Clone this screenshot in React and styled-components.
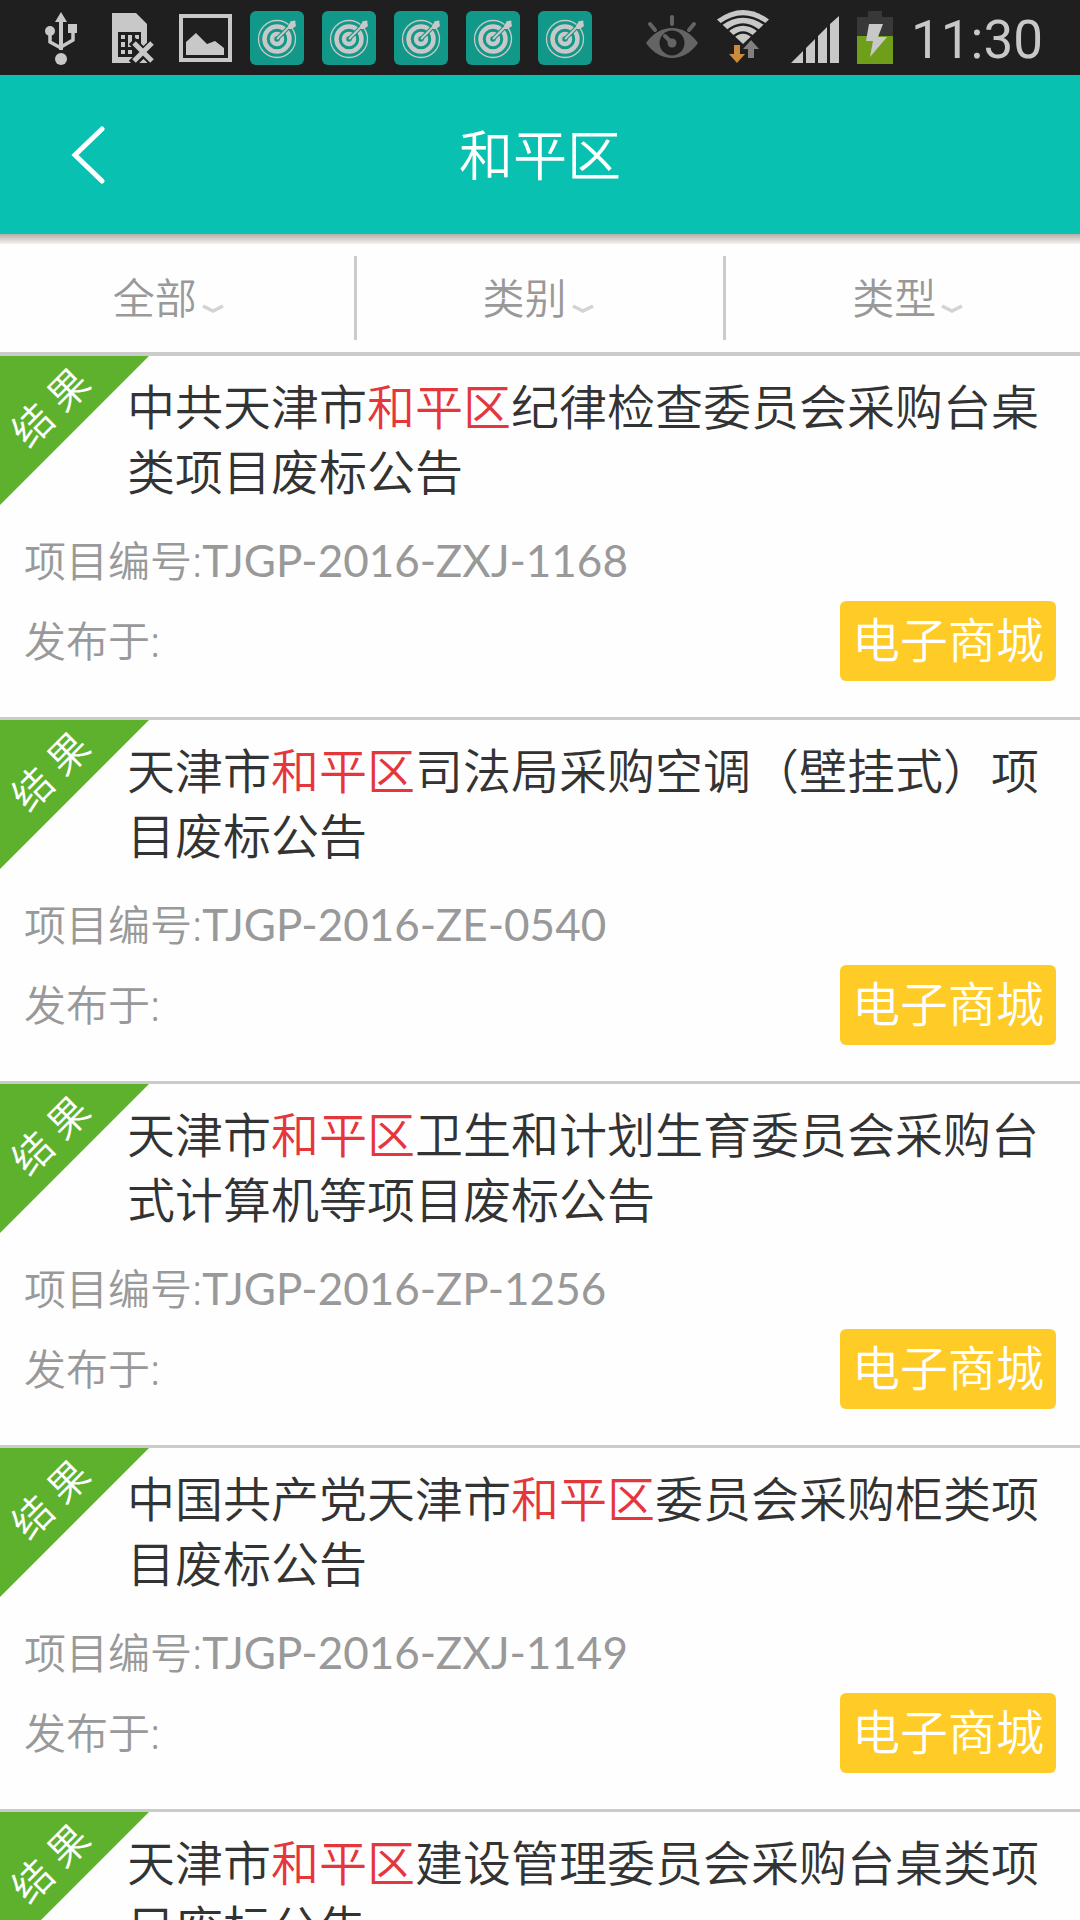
import React from "react";
import styled, { createGlobalStyle } from "styled-components";

const GlobalStyle = createGlobalStyle`
  * {
    box-sizing: border-box;
  }

  body {
    margin: 0;
    background: #fefefe;
    font-family: "Noto Sans", "Noto Sans CJK SC", sans-serif;
  }

  html,
  body {
    height: 100%;
    overflow: hidden;
  }

  #root {
    height: 100%;
  }
`;

const Page = styled.div`
  height: 100%;
  display: flex;
  flex-direction: column;
`;

const StatusBar = styled.div`
  display: flex;
  flex: none;
  align-items: center;
  justify-content: space-between;
  height: 75px;
  padding: 0 37px 0 38px;
  background: #1f1f1f;
`;

const StatusGroup = styled.div`
  display: flex;
  align-items: center;
  gap: 18px;

  svg {
    display: block;
  }
`;

const Clock = styled.time`
  padding-top: 5px;
  font-family: Roboto, sans-serif;
  font-size: 53px;
  line-height: 70px;
  color: #c8c8c8;
`;

const Header = styled.header`
  display: grid;
  flex: none;
  grid-template-columns: 176px 1fr 176px;
  align-items: center;
  height: 159px;
  background: #08c1b1;

  h1 {
    margin: 0;
    font-size: 54px;
    font-weight: 350;
    line-height: 80px;
    text-align: center;
    color: #fff;
  }
`;

const BackButton = styled.button`
  display: flex;
  align-items: center;
  justify-content: center;
  height: 100%;
  padding: 0;
  border: 0;
  background: none;
`;

const Shadow = styled.div`
  flex: none;
  height: 10px;
  background: linear-gradient(#b4aeaa, #f5f2ee);
`;

const FilterBar = styled.nav`
  flex: none;
  overflow: hidden;
  padding: 12px 0;
  border-bottom: 4px solid #cbcbcb;
`;

const Filters = styled.div`
  display: flex;
  margin: 0 -13px;
`;

const FilterButton = styled.button`
  display: flex;
  flex: 1;
  align-items: center;
  justify-content: center;
  gap: 5px;
  height: 84px;
  padding: 0 4px 0 0;
  border: 0;
  background: none;
  font-family: inherit;
  font-size: 42px;
  font-weight: 350;
  line-height: 84px;
  color: #999;

  & + & {
    border-left: 3px solid #cbcbcb;
  }

  svg {
    margin-top: 22px;
  }
`;

const List = styled.ul`
  flex: 1;
  min-height: 0;
  overflow: hidden;
  margin: 0;
  padding: 0;
  list-style: none;
`;

const Item = styled.li`
  position: relative;
  padding: 18px 24px 36px;
  border-bottom: 3px solid #cbcbcb;
`;

const Ribbon = styled.div`
  position: absolute;
  top: 0;
  left: 0;
  display: flex;
  align-items: center;
  justify-content: center;
  width: 149px;
  height: 149px;
  padding: 0 48px 48px 0;
  background: #5eb12d;
  clip-path: polygon(0 0, 100% 0, 0 100%);

  span {
    flex: none;
    font-size: 40px;
    font-weight: 350;
    line-height: 40px;
    white-space: pre;
    color: #fff;
    transform: rotate(-45deg);
  }
`;

const Title = styled.h2`
  margin: 0 0 17px;
  padding-left: 103px;
  font-size: 48px;
  font-weight: 350;
  line-height: 65px;
  color: #333;

  em {
    font-style: normal;
    color: #e5373b;
  }
`;

const Meta = styled.p`
  margin: 0;
  font-size: 42px;
  font-weight: 350;
  line-height: 80px;
  color: #999;
`;

const Code = styled.span`
  font-family: Lato, sans-serif;
  font-size: 44px;
  font-weight: 400;
  line-height: 44px;
`;

const Footer = styled.div`
  display: flex;
  align-items: center;
  justify-content: space-between;
`;

const Tag = styled.span`
  height: 80px;
  padding: 0 12px;
  border-radius: 6px;
  background: #ffcb26;
  font-size: 48px;
  font-weight: 350;
  line-height: 78px;
  color: #fff;
`;

const area = "和平区";

const notices = [
  {
    before: "中共天津市",
    after: "纪律检查委员会采购台桌类项目废标公告",
    code: "TJGP-2016-ZXJ-1168"
  },
  {
    before: "天津市",
    after: "司法局采购空调（壁挂式）项目废标公告",
    code: "TJGP-2016-ZE-0540"
  },
  {
    before: "天津市",
    after: "卫生和计划生育委员会采购台式计算机等项目废标公告",
    code: "TJGP-2016-ZP-1256"
  },
  {
    before: "中国共产党天津市",
    after: "委员会采购柜类项目废标公告",
    code: "TJGP-2016-ZXJ-1149"
  },
  {
    before: "天津市",
    after: "建设管理委员会采购台桌类项目废标公告",
    code: "TJGP-2016-ZXJ-1150"
  }
];

const UsbIcon = () => (
  <svg width="56" height="56" viewBox="0 0 56 56" fill="#c8c8c8">
    <path d="M23 2l6 10h-4v28h-4V12h-4z" />
    <circle cx="12" cy="21" r="5" />
    <path d="M30 14h9v9h-9z" />
    <path
      d="M12 22v10l11 6M35 22v8l-12 7"
      fill="none"
      stroke="#c8c8c8"
      strokeWidth="3.5"
    />
    <circle cx="23" cy="49" r="6" />
  </svg>
);

const SimIcon = () => (
  <svg width="49" height="50" viewBox="0 0 49 50">
    <path d="M0 0h24l11 11v39H0z" fill="#c8c8c8" />
    <path d="M6 19h23v25H6z" fill="#1f1f1f" />
    <path
      d="M9 22h4v4H9zM9 29h4v5H9zM9 37h4v4H9zM16 22h4v12h-4zM16 37h4v4h-4zM23 22h4v4h-4zM23 29h4v5h-4z"
      fill="#c8c8c8"
    />
    <path d="M20 28l23 23M43 28L20 51" stroke="#1f1f1f" strokeWidth="9" />
    <path d="M22 30l18 18M40 30L22 48" stroke="#c8c8c8" strokeWidth="5" />
  </svg>
);

const PictureIcon = () => (
  <svg width="53" height="48" viewBox="0 0 53 48">
    <path d="M2 2h49v44H2z" fill="none" stroke="#c8c8c8" strokeWidth="4" />
    <path d="M7 41V28l10-9 11 11 8-3 9 7v7z" fill="#c8c8c8" />
  </svg>
);

const TargetIcon = () => (
  <svg width="54" height="54" viewBox="0 0 54 54">
    <rect width="54" height="54" rx="6" fill="#119889" />
    <g fill="none" stroke="#c8c8c8">
      <circle cx="27" cy="28" r="18.5" strokeWidth="1.3" />
      <circle cx="27" cy="28" r="12.5" strokeWidth="4.5" />
      <circle cx="27" cy="28" r="5" strokeWidth="4.5" />
      <path d="M27 28L41 14" stroke="#119889" strokeWidth="4" />
      <path d="M27 28L45 10" strokeWidth="2" />
    </g>
    <path d="M38 15l3-5 4 0 1 5-4 3-3 0z" fill="#c8c8c8" />
  </svg>
);

const EyeIcon = () => (
  <svg width="52" height="46" viewBox="0 0 52 46">
    <path d="M0 28C14 8 38 8 52 28 38 48 14 48 0 28z" fill="#646464" />
    <circle cx="26" cy="28" r="12.5" fill="#1f1f1f" />
    <circle cx="26" cy="28" r="4.5" fill="#646464" />
    <path
      d="M19 21l5 5M26 2v7M4 9l5 6M48 9l-5 6"
      stroke="#646464"
      strokeWidth="4"
      strokeLinecap="round"
    />
  </svg>
);

const WifiIcon = () => (
  <svg width="55" height="56" viewBox="-1 0 55 56">
    <path d="M26 34L0 9.500Q26-9.500 52 9.500z" fill="#c8c8c8" />
    <g fill="none" stroke="#1f1f1f" strokeWidth="2.500">
      <path d="M3 15Q26-2 49 15" />
      <path d="M10 21Q26 8 42 21" />
      <path d="M16 27Q26 18 36 27" />
    </g>
    <path d="M17 35h6v9h5l-8 9-8-9h5z" fill="#cc8b3b" />
    <path d="M31 48h6V39h5l-8-9-8 9h5z" fill="#808080" />
  </svg>
);

const SignalIcon = () => (
  <svg width="50" height="51" viewBox="-2 -4 50 51" fill="#c8c8c8">
    <path d="M0 47l12-12v12zM15 47V32l9-9v24zM27 47V20l9-9v36zM39 47V8l9-8v47z" />
  </svg>
);

const BatteryIcon = () => (
  <svg width="36" height="53" viewBox="0 0 36 53">
    <path d="M11 0h14v6h11v19H0V6h11z" fill="#383838" />
    <path d="M0 25h36v28H0z" fill="#6f9f1a" />
    <path d="M12 13h14l-5 13h9L13 46l3-16H9z" fill="#c8c8c8" />
  </svg>
);

const ChevronDown = () => (
  <svg width="22" height="10" viewBox="0 0 22 10">
    <path d="M1 2l10 5 10-5" fill="none" stroke="#d3d3d3" strokeWidth="3.5" />
  </svg>
);

const Notice = ({ before, after, code }) => (
  <Item>
    <Ribbon>
      <span>结 果</span>
    </Ribbon>
    <Title>
      {before}
      <em>{area}</em>
      {after}
    </Title>
    <Meta>
      项目编号:<Code>{code}</Code>
    </Meta>
    <Footer>
      <Meta>发布于:</Meta>
      <Tag>电子商城</Tag>
    </Footer>
  </Item>
);

const App = () => {
  return (
    <Page>
      <GlobalStyle />
      <StatusBar>
        <StatusGroup>
          <UsbIcon />
          <SimIcon />
          <PictureIcon />
          {[1, 2, 3, 4, 5].map(n => (
            <TargetIcon key={n} />
          ))}
        </StatusGroup>
        <StatusGroup>
          <EyeIcon />
          <WifiIcon />
          <SignalIcon />
          <BatteryIcon />
          <Clock>11:30</Clock>
        </StatusGroup>
      </StatusBar>
      <Header>
        <BackButton aria-label="返回">
          <svg width="34" height="58" viewBox="0 0 34 58">
            <path
              d="M31 3L4 29l27 26"
              fill="none"
              stroke="#fff"
              strokeWidth="5"
              strokeLinecap="round"
            />
          </svg>
        </BackButton>
        <h1>{area}</h1>
      </Header>
      <Shadow />
      <FilterBar>
        <Filters>
          {["全部", "类别", "类型"].map(name => (
            <FilterButton key={name}>
              {name}
              <ChevronDown />
            </FilterButton>
          ))}
        </Filters>
      </FilterBar>
      <List>
        {notices.map(notice => (
          <Notice key={notice.code} {...notice} />
        ))}
      </List>
    </Page>
  );
};

export default App;
